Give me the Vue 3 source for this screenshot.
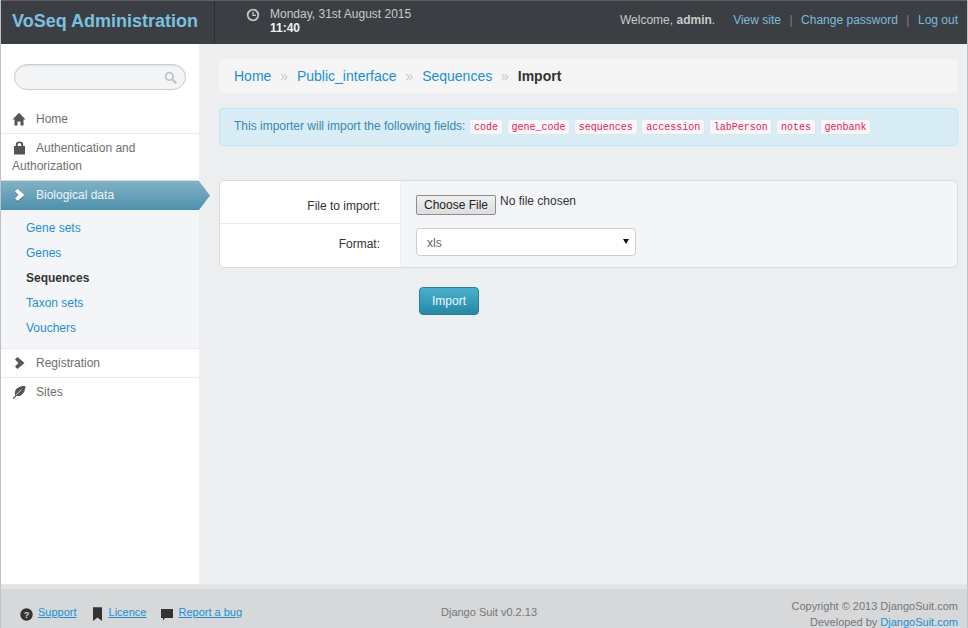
<template>
	<div class="page">
		<header class="top">
			<div class="brand">VoSeq Administration</div>
			<div class="clock">
				<svg class="clock-icon" viewBox="0 0 14 14" width="14" height="14">
					<circle cx="7" cy="7" r="5.3" fill="none" stroke="#c4c6c8" stroke-width="1.8" />
					<path d="M7 3.8V7.3H10" fill="none" stroke="#c4c6c8" stroke-width="1.3" />
				</svg>
				<div class="clock-text">
					<div>Monday, 31st August 2015</div>
					<strong>11:40</strong>
				</div>
			</div>
			<div class="user">
				<span class="welcome">Welcome, <strong>admin</strong>.</span>
				<a>View site</a>
				<span class="sep">|</span>
				<a>Change password</a>
				<span class="sep">|</span>
				<a>Log out</a>
			</div>
		</header>

		<div class="middle">
			<aside class="side">
				<div class="search">
					<svg viewBox="0 0 14 14" width="13" height="13">
						<circle cx="5.8" cy="5.8" r="4" fill="none" stroke="#c2c4c6" stroke-width="2" />
						<path d="M8.8 8.8L12.6 12.6" stroke="#c2c4c6" stroke-width="2.4" stroke-linecap="round" />
					</svg>
				</div>
				<nav class="menu">
					<div class="item first">
						<svg class="icon" viewBox="0 0 14 14" width="14" height="14">
							<path d="M7 0.8L13.5 7.5H11.5V13.5H8.5V9.5H5.5V13.5H2.5V7.5H0.5Z" fill="#555" />
						</svg>
						<span>Home</span>
					</div>
					<div class="item wrap">
						<svg class="icon" viewBox="0 0 14 14" width="14" height="14">
							<path d="M2 5H3.8V3.5C3.8 1.2 5.3 0.5 7.5 0.5C9.7 0.5 11.2 1.2 11.2 3.5V5H13V13.5H2Z M5.8 5H9.2V3.6C9.2 2.5 8.6 2.2 7.5 2.2C6.4 2.2 5.8 2.5 5.8 3.6Z" fill="#555" fill-rule="evenodd" />
						</svg>
						<span class="wrap-first">Authentication and</span> Authorization
					</div>
					<div class="item active">
						<svg class="icon chevron" viewBox="0 0 14 14" width="14" height="14">
							<path d="M5.5 1L12.5 7L5.5 13L3 10.5L6.5 7L3 3.5Z" fill="#fff" />
						</svg>
						<span>Biological data</span>
					</div>
					<ul class="sub">
						<li v-for="link in subLinks" :key="link" :class="{ current: link === 'Sequences' }">{{ link }}</li>
					</ul>
					<div class="item after-sub">
						<svg class="icon" viewBox="0 0 14 14" width="14" height="14">
							<path d="M5.5 1L12.5 7L5.5 13L3 10.5L6.5 7L3 3.5Z" fill="#555" />
						</svg>
						<span>Registration</span>
					</div>
					<div class="item">
						<svg class="icon" viewBox="0 0 14 14" width="14" height="14">
							<path d="M13.5 1C8 1 3.6 2.6 2.9 7.3C2.7 8.6 2.9 9.6 3.3 10.2L0.8 13.2L1.8 13.9L4.3 10.9C9.4 12 13 8 13.5 1Z" fill="#555" />
							<path d="M3.8 10.2L9.5 4.6" stroke="#fff" stroke-width="0.7" />
						</svg>
						<span>Sites</span>
					</div>
				</nav>
			</aside>

			<main class="main">
				<div class="crumbs">
					<a>Home</a><span class="raquo">»</span>
					<a>Public_interface</a><span class="raquo">»</span>
					<a>Sequences</a><span class="raquo">»</span>
					<strong>Import</strong>
				</div>
				<div class="notice">
					<span>This importer will import the following fields:</span>
					<code v-for="field in fields" :key="field">{{ field }}</code>
				</div>
				<form class="card">
					<div class="row">
						<label>File to import:</label>
						<div class="control file-control">
							<button class="file-button" type="button">Choose File</button>
							<span class="file-name">No file chosen</span>
						</div>
					</div>
					<div class="row">
						<label>Format:</label>
						<div class="control">
							<div class="select-wrap">
								<select class="format">
									<option>xls</option>
								</select>
							</div>
						</div>
					</div>
				</form>
				<div class="actions">
					<button class="submit" type="button">Import</button>
				</div>
			</main>
		</div>

		<footer class="foot">
			<div class="foot-links">
				<span class="foot-link">
					<svg class="round" viewBox="0 0 14 14" width="13" height="13">
						<circle cx="7" cy="7" r="6.7" fill="#333" />
						<text x="7" y="10.6" text-anchor="middle" class="q">?</text>
					</svg>
					<a>Support</a>
				</span>
				<span class="foot-link">
					<svg viewBox="0 0 14 14" width="14" height="14">
						<path d="M3 0.3H12V14L7.5 10.5L3 14Z" fill="#333" />
					</svg>
					<a>Licence</a>
				</span>
				<span class="foot-link">
					<svg viewBox="0 0 14 14" width="14" height="14">
						<path d="M2 2H14V11H6L4 13.5V11H2Z" fill="#333" />
					</svg>
					<a>Report a bug</a>
				</span>
			</div>
			<div class="version">Django Suit v0.2.13</div>
			<div class="copy">
				<div>Copyright © 2013 DjangoSuit.com</div>
				<div>Developed by <a>DjangoSuit.com</a></div>
			</div>
		</footer>
	</div>
</template>

<script setup>
const subLinks = ["Gene sets", "Genes", "Sequences", "Taxon sets", "Vouchers"];
const fields = ["code", "gene_code", "sequences", "accession", "labPerson", "notes", "genbank"];
</script>

<style scoped>
.page {
	display: flex;
	flex-direction: column;
	height: 628px;
	overflow: hidden;
	box-sizing: border-box;
	border-left: 1px solid #bfc1c3;
	border-right: 1px solid #bfc1c3;
	font-family: "Liberation Sans", Arial, sans-serif;
	font-size: 12px;
	line-height: 18px;
	color: #333;
	background: #eceef0;
}
.top {
	display: flex;
	align-items: stretch;
	flex: none;
	height: 43px;
	border-top: 1px solid #5c6064;
	background: #3b3f43;
	color: #c8cacc;
}
.brand {
	width: 202px;
	padding-left: 11px;
	border-right: 1px solid #2c2f32;
	font-size: 18px;
	font-weight: bold;
	line-height: 41px;
	color: #7cc0e0;
}
.clock {
	display: flex;
	gap: 10px;
	padding: 6px 0 0 31px;
}
.clock-icon {
	margin-top: 1px;
}
.clock-text {
	line-height: 14px;
}
.clock-text strong {
	color: #f0f0f0;
}
.user {
	margin-left: auto;
	padding: 10px 9px 0 0;
	white-space: nowrap;
}
.welcome {
	margin-right: 18px;
}
.user a {
	color: #7cbbdc;
}
.sep {
	margin: 0 8.5px;
	color: #7c8084;
}
.middle {
	display: flex;
	flex: 1;
	min-height: 0;
}
.side {
	flex: none;
	width: 198px;
	background: #fff;
}
.search {
	display: flex;
	align-items: center;
	justify-content: flex-end;
	box-sizing: border-box;
	width: 172px;
	height: 26px;
	margin: 20px 0 15px 13px;
	padding-right: 8px;
	border: 1px solid #c9cbcd;
	border-radius: 13px;
	background: #f4f5f7;
	box-shadow: inset 0 1px 2px rgba(0, 0, 0, 0.08);
}
.item {
	position: relative;
	padding: 5px 11px;
	border-top: 1px solid #eaecee;
	color: #6f6f6f;
	line-height: 18px;
}
.item.first {
	border-top: 0;
}
.icon {
	display: inline-block;
	width: 14px;
	height: 14px;
	margin-right: 10px;
	vertical-align: -3px;
}
.wrap-first {
	margin-right: 20px;
}
.active {
	padding: 5px 11px 6px;
	border-top: 1px solid #d4dde2;
	color: #eef5f8;
	background: linear-gradient(#82b2c6, #4e90ac);
}
.active::after {
	content: "";
	position: absolute;
	top: 0;
	right: -11px;
	width: 11px;
	height: 100%;
	background: linear-gradient(#82b2c6, #4e90ac);
	clip-path: polygon(0 0, 100% 50%, 0 100%);
}
.chevron {
	filter: drop-shadow(0 1px 0 rgba(0, 0, 0, 0.3));
}
.sub {
	margin: 0;
	padding: 6px 0 7px 25px;
	list-style: none;
	background: #f4f5f8;
}
.sub li {
	height: 25px;
	line-height: 25px;
	color: #1c8fd0;
}
.sub li.current {
	font-weight: bold;
	color: #333;
}
.main {
	flex: 1;
	min-width: 0;
	padding: 15px 9px 0 20px;
}
.crumbs {
	display: flex;
	align-items: center;
	height: 34px;
	padding-left: 15px;
	border-radius: 4px;
	background: #f5f5f5;
	font-size: 14px;
}
.crumbs a {
	color: #1c8fd0;
}
.raquo {
	margin: 0 8.9px;
	color: #c6c8ca;
}
.notice {
	display: flex;
	align-items: center;
	box-sizing: border-box;
	height: 38px;
	margin-top: 15px;
	padding: 0 14px;
	border: 1px solid #bce8f1;
	border-radius: 4px;
	background: #d9edf7;
	color: #3a87ad;
}
.notice span {
	margin-bottom: 2px;
}
.notice code {
	box-sizing: border-box;
	height: 16px;
	margin-left: 3.8px;
	padding: 0 3.8px;
	border: 1px solid #e1e4ec;
	border-radius: 3px;
	background: #f7f7f9;
	color: #e0205a;
	font-family: "Liberation Mono", monospace;
	font-size: 10px;
	line-height: 15px;
}
.card {
	margin: 34px 0 0;
	overflow: hidden;
	border: 1px solid #d9dbdd;
	border-radius: 5px;
	background: #f4f5f8;
}
.row {
	display: flex;
}
.row + .row label {
	border-top: 1px solid #eaecee;
}
.row label {
	flex: none;
	box-sizing: border-box;
	width: 181px;
	border-right: 1px solid #eaecee;
	background: #fff;
	text-align: right;
	padding-right: 20px;
}
.row:first-child label {
	height: 42px;
	padding-top: 16px;
}
.row:last-child label {
	height: 44px;
	padding-top: 11px;
}
.control {
	padding-left: 15px;
}
.file-control {
	display: flex;
	align-items: flex-start;
	gap: 4px;
	padding-top: 14px;
}
.file-button {
	box-sizing: border-box;
	width: 80px;
	height: 20px;
	padding: 0;
	border: 1px solid #8c8c8c;
	border-radius: 2px;
	background: linear-gradient(#f0f0f0, #dddddd);
	color: #222;
	font-family: "Liberation Sans", Arial, sans-serif;
	font-size: 12px;
}
.file-name {
	margin-top: -3px;
	color: #333;
}
.select-wrap {
	position: relative;
	width: 220px;
	margin-top: 5px;
}
.select-wrap::after {
	content: "";
	position: absolute;
	top: 11px;
	right: 7px;
	border-top: 5px solid #111;
	border-left: 3px solid transparent;
	border-right: 3px solid transparent;
}
.format {
	display: block;
	box-sizing: border-box;
	width: 100%;
	height: 28px;
	padding: 2px 10px 0;
	border: 1px solid #ccc;
	border-radius: 4px;
	background: #fff;
	color: #666;
	font-family: "Liberation Sans", Arial, sans-serif;
	font-size: 12px;
	appearance: none;
}
.actions {
	padding: 19px 0 0 200px;
}
.submit {
	display: block;
	width: 60px;
	height: 28px;
	padding: 0;
	border: 1px solid #2a7d9d;
	border-radius: 4px;
	background: linear-gradient(#49afcd, #2f96b4 70%, #2a85a0);
	color: #eef6f9;
	font-family: "Liberation Sans", Arial, sans-serif;
	font-size: 12px;
}
.foot {
	position: relative;
	display: flex;
	flex: none;
	box-sizing: border-box;
	height: 44px;
	border-top: 5px solid #e3e4e6;
	background: #d6d8da;
	color: #777;
	font-size: 11px;
	line-height: 16px;
}
.foot-links {
	display: flex;
	gap: 13px;
	padding: 15px 0 0 19px;
}
.foot-link {
	display: flex;
	gap: 5px;
	align-items: flex-start;
}
.foot-link svg {
	margin-top: 3px;
}
.foot-link svg.round {
	margin-top: 4px;
}
.foot-link a {
	color: #1c8fd0;
	text-decoration: underline;
}
.q {
	fill: #d6d8da;
	font-size: 10px;
	font-weight: bold;
}
.version {
	position: absolute;
	left: 440px;
	top: 15px;
}
.copy {
	margin-left: auto;
	padding: 9px 9px 0 0;
	text-align: right;
}
.copy a {
	color: #1c8fd0;
}
</style>
